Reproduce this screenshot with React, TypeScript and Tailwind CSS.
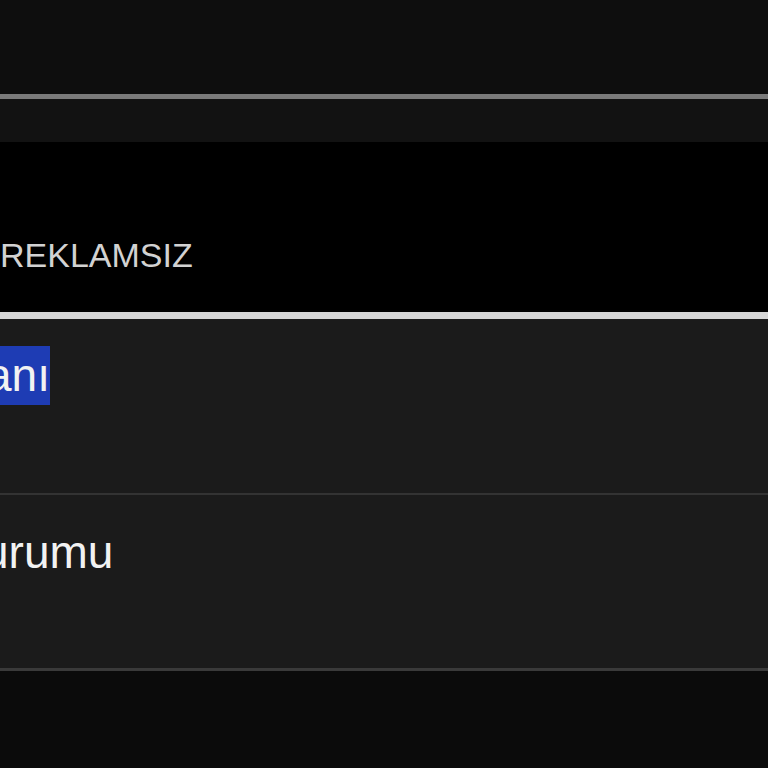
export default function App() {
  return (
    <div
      className="flex h-[768px] w-[768px] flex-col overflow-hidden bg-[#0b0b0b]"
      style={{ fontFamily: '"Liberation Sans", Arial, sans-serif' }}
    >
      {/* top bar */}
      <div className="h-[94px] bg-[#0e0e0e]" />
      <div className="h-[5px] bg-[#7a7a7a]" />
      <div className="h-[43px] bg-[#121212]" />

      {/* banner */}
      <div className="h-[170px] bg-black pt-[96px]">
        <p className="text-[34px] leading-[35px] text-[#d2d2d2]">REKLAMSIZ</p>
      </div>
      <div className="h-[7px] bg-[#d6d6d6]" />

      {/* list rows */}
      <div className="h-[174px] bg-[#1b1b1b] pt-[27px]">
        <p className="ml-[-14px] text-[46px] leading-[59px] text-[#f2f2f2]">
          <span className="inline-block bg-[#1e3cb4]">anı</span>
        </p>
      </div>
      <div className="h-[2px] bg-[#333333]" />
      <div className="h-[173px] bg-[#1b1b1b] pt-[28px]">
        <p className="ml-[-17px] text-[46px] leading-[59px] text-[#f2f2f2]">urumu</p>
      </div>
      <div className="h-[3px] bg-[#3a3a3a]" />
      <div className="flex-1 bg-[#0b0b0b]" />
    </div>
  );
}
